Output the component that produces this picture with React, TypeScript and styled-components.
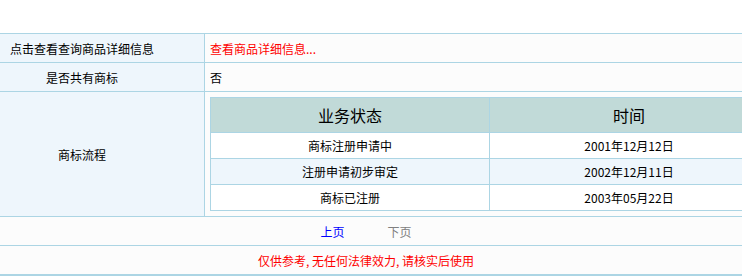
import React from "react";
import styled, { createGlobalStyle } from "styled-components";

const Global = createGlobalStyle`
  html, body { margin: 0; padding: 0; background: #ffffff; overflow: hidden; }
  body { font-family: "SimSun", "Noto Sans CJK SC", "Liberation Sans", sans-serif; font-size: 12px; color: #000; }
`;

const LINE = "#acd5e4";

const Page = styled.div`
  width: 742px;
  overflow: hidden;
  padding-top: 33px;
`;

const InfoTable = styled.div`
  border-top: 1px solid ${LINE};
`;

const Row = styled.div`
  display: grid;
  grid-template-columns: 205px 1fr;
  border-bottom: 1px solid ${LINE};
`;

const Label = styled.div`
  background: #eef6fc;
  border-right: 1px solid ${LINE};
  display: flex;
  align-items: center;
  justify-content: center;
  padding-right: 40px;
  min-height: 28px;
`;

const Value = styled.div<{ $pad?: boolean }>`
  background: #fcfcfc;
  display: flex;
  align-items: center;
  padding: ${(p) => (p.$pad ? "5px 0 5px 5px" : "0 0 0 5px")};
  min-height: 28px;
  min-width: 0;
  overflow: visible;
`;

const RedLink = styled.a`
  color: #ff0000;
  text-decoration: none;
`;

const FlowTable = styled.div`
  width: 557px;
  flex: none;
  background: #ffffff;
  border-top: 1px solid ${LINE};
  border-left: 1px solid ${LINE};
`;

const FlowRow = styled.div<{ $head?: boolean; $alt?: boolean }>`
  display: grid;
  grid-template-columns: 278px 1fr;
  height: ${(p) => (p.$head ? "35px" : "26px")};
  background: ${(p) => (p.$head ? "#c1dad8" : p.$alt ? "#eef6fc" : "#ffffff")};
  border-bottom: 1px solid ${LINE};
  font-size: ${(p) => (p.$head ? "16px" : "12px")};
  box-sizing: border-box;
`;

const FlowCell = styled.div`
  display: flex;
  align-items: center;
  justify-content: center;
  & + & { border-left: 1px solid ${LINE}; }
`;

const Pager = styled.div`
  height: 28px;
  background: #fcfcfc;
  border-bottom: 1px solid ${LINE};
  display: flex;
  align-items: center;
  justify-content: center;
  gap: 43px;
  padding-right: 10px;
`;

const PageLink = styled.a<{ $disabled?: boolean }>`
  color: ${(p) => (p.$disabled ? "#808080" : "#0000ff")};
  text-decoration: none;
`;

const Footer = styled.div`
  height: 28px;
  background: #fcfcfc;
  border-bottom: 2px solid ${LINE};
  display: flex;
  align-items: center;
  justify-content: center;
  padding-right: 10px;
  color: #ff0000;
`;

const flow = [
  ["商标注册申请中", "2001年12月12日"],
  ["注册申请初步审定", "2002年12月11日"],
  ["商标已注册", "2003年05月22日"],
];

export default function App() {
  return (
    <Page>
      <Global />
      <InfoTable>
        <Row>
          <Label>点击查看查询商品详细信息</Label>
          <Value>
            <RedLink href="#">查看商品详细信息...</RedLink>
          </Value>
        </Row>
        <Row>
          <Label>是否共有商标</Label>
          <Value>否</Value>
        </Row>
        <Row>
          <Label>商标流程</Label>
          <Value $pad>
            <FlowTable>
              <FlowRow $head>
                <FlowCell>业务状态</FlowCell>
                <FlowCell>时间</FlowCell>
              </FlowRow>
              {flow.map(([s, t], i) => (
                <FlowRow key={s} $alt={i % 2 === 1}>
                  <FlowCell>{s}</FlowCell>
                  <FlowCell>{t}</FlowCell>
                </FlowRow>
              ))}
            </FlowTable>
          </Value>
        </Row>
      </InfoTable>
      <Pager>
        <PageLink href="#">上页</PageLink>
        <PageLink $disabled>下页</PageLink>
      </Pager>
      <Footer>仅供参考, 无任何法律效力, 请核实后使用</Footer>
    </Page>
  );
}
